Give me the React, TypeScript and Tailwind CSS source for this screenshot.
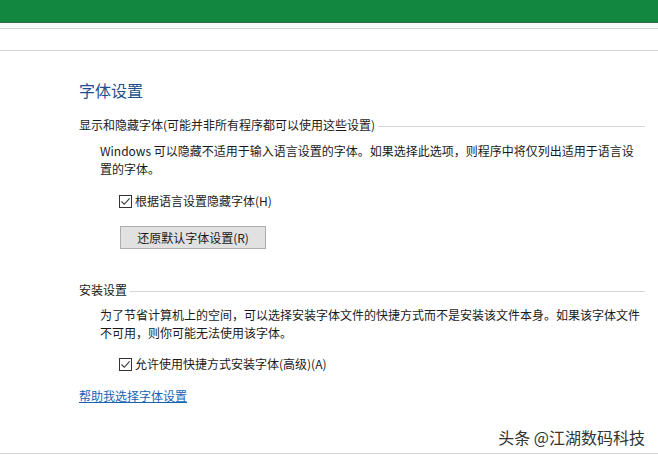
import React from "react";

const font = { fontFamily: '"Noto Sans CJK SC", "Noto Sans", sans-serif' };

const CheckBox = ({ label }: { label: string }) => {
  return (
    <div className="flex h-[18px] items-center">
      <span className="flex h-[13px] w-[13px] items-center justify-center border border-[#333333] bg-white">
        <svg width="11" height="11" viewBox="0 0 11 11" fill="none">
          <path d="M1.5 5.5 L4.3 8.3 L9.6 2.4" stroke="#333333" strokeWidth="1.1" />
        </svg>
      </span>
      <span className="ml-[3px]">{label}</span>
    </div>
  );
};

const GroupHeader = ({ title }: { title: string }) => {
  return (
    <div className="flex h-[18px] items-center pr-[13px]">
      <span>{title}</span>
      <div className="ml-[3px] mt-[3px] flex-1 border-t border-[#d6d6d6]" />
    </div>
  );
};

const App = () => {
  return (
    <div className="flex h-[459px] w-[658px] flex-col bg-white text-[12px] leading-[18px] text-[#1a1a1a]" style={font}>
      <div className="h-[23px] border-b border-[#2d6a45] bg-[#11873f]" />
      <div className="h-[5px] bg-[#f7fcfa]" />
      <div className="h-[22px] border-t border-[#d4d4d4]" />
      <div className="border-t border-[#d4d4d4]" />

      <section className="pl-[79px]">
        <h1 className="mt-[29px] text-[16px] leading-[20px] text-[#1f4f8e]">字体设置</h1>

        <div className="mt-[16px]">
          <GroupHeader title="显示和隐藏字体(可能并非所有程序都可以使用这些设置)" />
          <div className="pl-[21px]">
            <p className="mt-[8px]">
              Windows 可以隐藏不适用于输入语言设置的字体。如果选择此选项，则程序中将仅列出适用于语言设
              <br />
              置的字体。
            </p>
            <div className="mt-[14px] pl-[19px]">
              <CheckBox label="根据语言设置隐藏字体(H)" />
            </div>
            <button className="ml-[20px] mt-[16px] flex h-[23px] w-[146px] items-center justify-center border border-[#adadad] bg-[#e1e1e1] text-[#1a1a1a]">
              还原默认字体设置(R)
            </button>
          </div>
        </div>

        <div className="mt-[32px]">
          <GroupHeader title="安装设置" />
          <div className="pl-[21px]">
            <p className="mt-[7px]">
              为了节省计算机上的空间，可以选择安装字体文件的快捷方式而不是安装该文件本身。如果该字体文件
              <br />
              不可用，则你可能无法使用该字体。
            </p>
            <div className="mt-[13px] pl-[19px]">
              <CheckBox label="允许使用快捷方式安装字体(高级)(A)" />
            </div>
          </div>
        </div>

        <a href="#" className="mt-[14px] block w-fit text-[#1464b4] underline">
          帮助我选择字体设置
        </a>
      </section>

      <div className="mt-[22px] flex h-[20px] items-center justify-end pr-[13px]">
        <span
          className="text-[16px] leading-[20px] text-[#333333]"
          style={{ textShadow: "0 0 2px #ffffff, 0 0 1px #ffffff" }}
        >
          头条 @江湖数码科技
        </span>
      </div>
      <div className="mt-[6px] border-t border-[#d4d4d4]" />
    </div>
  );
};

export default App;
